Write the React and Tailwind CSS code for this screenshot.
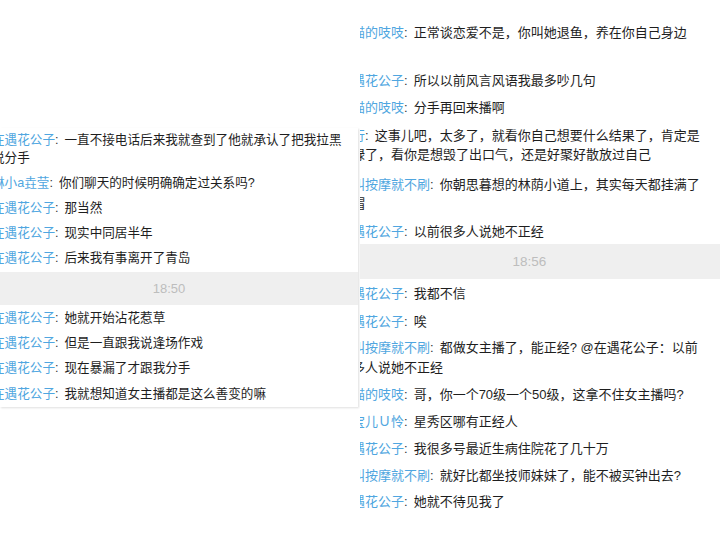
import React from "react";

const NAME = "text-[#4fa6e0]";

function Msg({ name, lines, mt }) {
  return (
    <div className={`whitespace-nowrap text-[#1e1e1e] ${mt}`}>
      <span className={NAME}>{name}</span>
      <span className="text-[#333]">:</span>
      <span className="ml-[6px]">{lines[0]}</span>
      {lines.slice(1).map((l, i) => (
        <div key={i}>{l}</div>
      ))}
    </div>
  );
}

const left = [
  { name: "在遇花公子", lines: ["一直不接电话后来我就查到了他就承认了把我拉黑", "说分手"], mt: "mt-0" },
  { name: "琳小a垚莹", lines: ["你们聊天的时候明确确定过关系吗?"], mt: "mt-[7px]" },
  { name: "在遇花公子", lines: ["那当然"], mt: "mt-[7px]" },
  { name: "在遇花公子", lines: ["现实中同居半年"], mt: "mt-[7px]" },
  { name: "在遇花公子", lines: ["后来我有事离开了青岛"], mt: "mt-[7px]" },
];
const left2 = [
  { name: "在遇花公子", lines: ["她就开始沾花惹草"], mt: "mt-[4px]" },
  { name: "在遇花公子", lines: ["但是一直跟我说逢场作戏"], mt: "mt-[7px]" },
  { name: "在遇花公子", lines: ["现在暴漏了才跟我分手"], mt: "mt-[7px]" },
  { name: "在遇花公子", lines: ["我就想知道女主播都是这么善变的嘛"], mt: "mt-[8px]" },
];

const right = [
  { name: "小猫的吱吱", lines: ["正常谈恋爱不是，你叫她退鱼，养在你自己身边"], mt: "mt-[23px]" },
  { name: "在遇花公子", lines: ["所以以前风言风语我最多吵几句"], mt: "mt-[28px]" },
  { name: "小猫的吱吱", lines: ["分手再回来播啊"], mt: "mt-[8px]" },
  { name: "小行", lines: ["这事儿吧，太多了，就看你自己想要什么结果了，肯定是", "被绿了，看你是想毁了出口气，还是好聚好散放过自己"], mt: "mt-[8px]" },
  { name: "不叫按摩就不刷", lines: ["你朝思暮想的林荫小道上，其实每天都挂满了", "绿帽"], mt: "mt-[10px]" },
  { name: "在遇花公子", lines: ["以前很多人说她不正经"], mt: "mt-[8px]" },
];
const right2 = [
  { name: "在遇花公子", lines: ["我都不信"], mt: "mt-[5px]" },
  { name: "在遇花公子", lines: ["唉"], mt: "mt-[8px]" },
  { name: "不叫按摩就不刷", lines: ["都做女主播了，能正经? @在遇花公子：以前", "很多人说她不正经"], mt: "mt-[7px]" },
  { name: "小猫的吱吱", lines: ["哥，你一个70级一个50级，这拿不住女主播吗?"], mt: "mt-[8px]" },
  { name: "小宝儿Ｕ怜", lines: ["星秀区哪有正经人"], mt: "mt-[7px]" },
  { name: "在遇花公子", lines: ["我很多号最近生病住院花了几十万"], mt: "mt-[8px]" },
  { name: "不叫按摩就不刷", lines: ["就好比都坐技师妹妹了，能不被买钟出去?"], mt: "mt-[7px]" },
  { name: "在遇花公子", lines: ["她就不待见我了"], mt: "mt-[7px]" },
];

export default function App() {
  return (
    <div className="w-[720px] h-[540px] bg-white flex items-start overflow-hidden font-['Liberation_Sans','Noto_Sans_CJK_SC',sans-serif]">
      {/* left screenshot */}
      <div className="mt-[128px] w-[358px] shrink-0 overflow-hidden bg-white shadow-[1px_1px_2px_rgba(0,0,0,0.13)]">
        <div className="ml-[-8px] w-[366px] pt-[3px] pb-[4px] text-[12.6px] leading-[18px]">
          {left.map((m, i) => (
            <Msg key={i} {...m} />
          ))}
          <div className="mt-[5px] h-[33px] bg-[#efefef] flex items-center justify-center pr-[12px] text-[13px] text-[#bdbdbd]">
            18:50
          </div>
          {left2.map((m, i) => (
            <Msg key={i} {...m} />
          ))}
        </div>
      </div>
      {/* right screenshot */}
      <div className="ml-[2px] w-[360px] h-[540px] shrink-0 overflow-hidden bg-white">
        <div className="ml-[-21px] w-[381px] text-[13px] leading-[19.5px]">
          {right.map((m, i) => (
            <Msg key={i} {...m} />
          ))}
          <div className="mt-[3px] h-[35px] bg-[#efefef] flex items-center justify-center text-[13.5px] text-[#bdbdbd]">
            18:56
          </div>
          {right2.map((m, i) => (
            <Msg key={i} {...m} />
          ))}
        </div>
      </div>
    </div>
  );
}
